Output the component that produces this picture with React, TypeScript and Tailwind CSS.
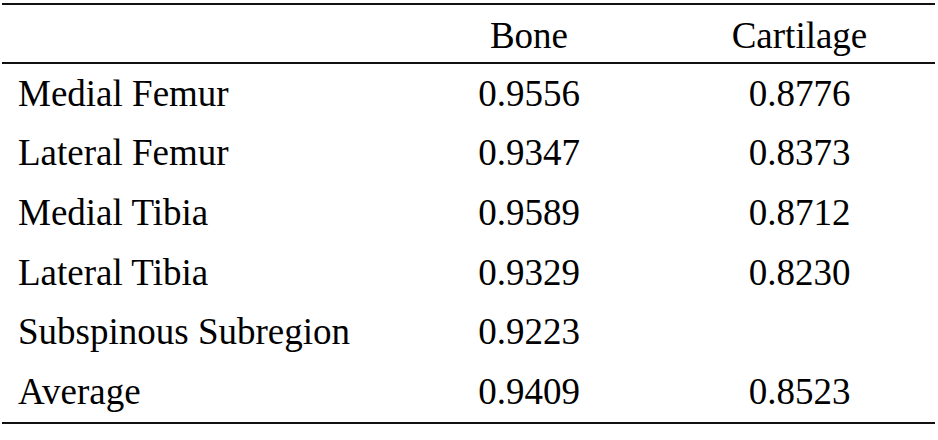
import React from "react";

const rows: [string, string, string][] = [
  ["Medial Femur", "0.9556", "0.8776"],
  ["Lateral Femur", "0.9347", "0.8373"],
  ["Medial Tibia", "0.9589", "0.8712"],
  ["Lateral Tibia", "0.9329", "0.8230"],
  ["Subspinous Subregion", "0.9223", ""],
  ["Average", "0.9409", "0.8523"],
];

export default function App() {
  return (
    <div className="w-[938px] h-[440px] bg-white text-black pt-[3px] pl-[2px] font-['Liberation_Serif','Times_New_Roman',serif]">
      <div className="w-[933px] border-t-2 border-b-2 border-[#111]">
        <div className="grid grid-cols-[390px_272px_271px] h-[59px] items-center text-[37px] leading-[42px] pt-[4px] border-b-2 border-[#111]">
          <div />
          <div className="text-center pl-[2px]">Bone</div>
          <div className="text-center">Cartilage</div>
        </div>
        {rows.map(([name, bone, cart]) => (
          <div
            key={name}
            className="grid grid-cols-[390px_272px_271px] h-[59.6px] items-center text-[37px] leading-[42px]"
          >
            <div className="pl-[16px]">{name}</div>
            <div className="text-center pl-[2px]">{bone}</div>
            <div className="text-center">{cart}</div>
          </div>
        ))}
      </div>
    </div>
  );
}
